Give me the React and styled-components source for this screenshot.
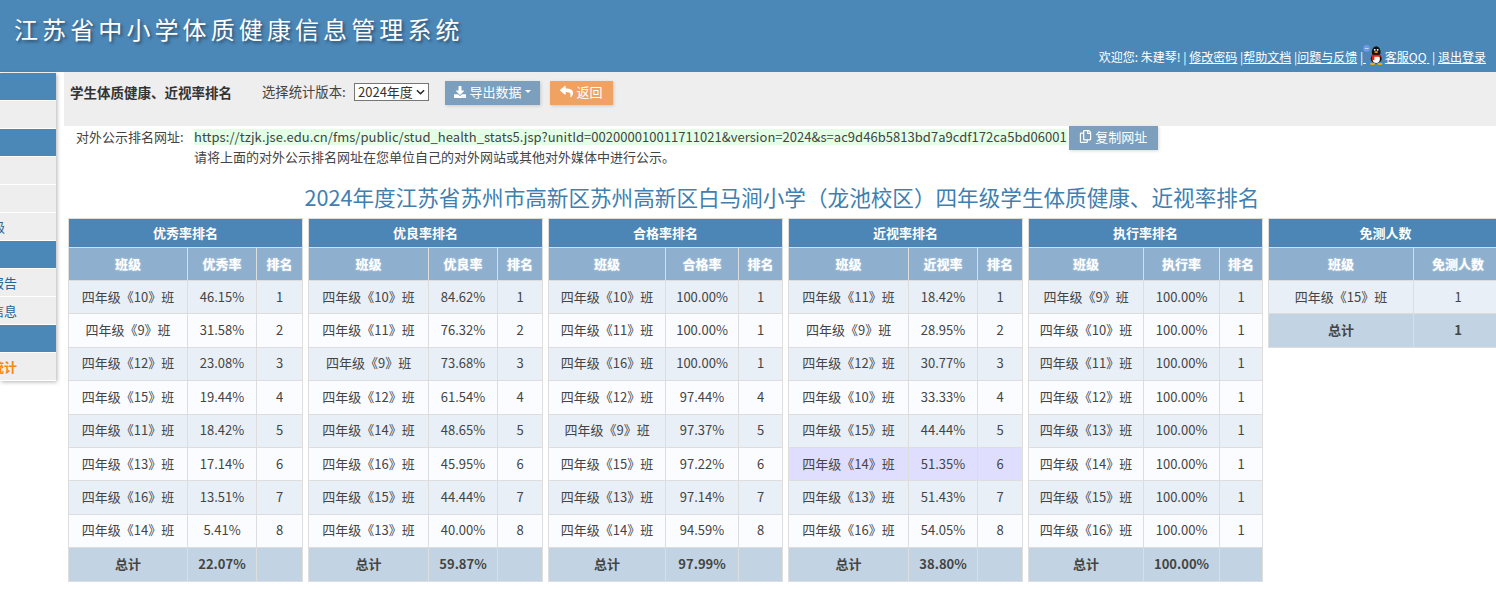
import React from 'react';
import styled, { createGlobalStyle } from 'styled-components';
import { FaDownload, FaReply, FaRegCopy } from 'react-icons/fa';

const FONT = '"Noto Sans CJK SC", "Noto Sans", sans-serif';

const tables = [
  {
    title: '优秀率排名', label: '优秀率', cols: [119, 69, 46], total: '22.07%',
    rows: [['10', '46.15%'], ['9', '31.58%'], ['12', '23.08%'], ['15', '19.44%'], ['11', '18.42%'], ['13', '17.14%'], ['16', '13.51%'], ['14', '5.41%']],
  },
  {
    title: '优良率排名', label: '优良率', cols: [120, 69, 45], total: '59.87%',
    rows: [['10', '84.62%'], ['11', '76.32%'], ['9', '73.68%'], ['12', '61.54%'], ['14', '48.65%'], ['16', '45.95%'], ['15', '44.44%'], ['13', '40.00%']],
  },
  {
    title: '合格率排名', label: '合格率', cols: [117, 73, 44], total: '97.99%',
    rows: [['10', '100.00%', 1], ['11', '100.00%', 1], ['16', '100.00%', 1], ['12', '97.44%', 4], ['9', '97.37%', 5], ['15', '97.22%', 6], ['13', '97.14%', 7], ['14', '94.59%', 8]],
  },
  {
    title: '近视率排名', label: '近视率', cols: [120, 69, 45], total: '38.80%', highlight: 5,
    rows: [['11', '18.42%'], ['9', '28.95%'], ['12', '30.77%'], ['10', '33.33%'], ['15', '44.44%'], ['14', '51.35%'], ['13', '51.43%'], ['16', '54.05%']],
  },
  {
    title: '执行率排名', label: '执行率', cols: [115, 76, 43], total: '100.00%',
    rows: [['9', '100.00%', 1], ['10', '100.00%', 1], ['11', '100.00%', 1], ['12', '100.00%', 1], ['13', '100.00%', 1], ['14', '100.00%', 1], ['15', '100.00%', 1], ['16', '100.00%', 1]],
  },
];

const sideItems = [
  { head: true }, {},
  { head: true }, {}, {}, { text: '级', pad: 51 },
  { head: true }, { text: '报告' }, { text: '信息' },
  { head: true }, { text: '统计', active: true },
];

const QQIcon = () => (
  <QQSvg viewBox="0 0 30 30">
    <circle cx="5" cy="6" r="4.6" fill="#6f9ae6" />
    <rect x="2.5" y="5.4" width="5" height="1.2" fill="#d5e3fb" />
    <ellipse cx="18" cy="11" rx="6" ry="8" fill="#111" />
    <ellipse cx="18" cy="20" rx="7.5" ry="6.5" fill="#111" />
    <ellipse cx="18" cy="20.5" rx="5" ry="5.5" fill="#fff" />
    <rect x="11.5" y="14.5" width="13" height="3" rx="1.4" fill="#e0201b" />
    <rect x="12" y="16" width="3.5" height="6" fill="#e0201b" />
    <circle cx="16" cy="8" r="1.3" fill="#fff" />
    <circle cx="20" cy="8" r="1.3" fill="#fff" />
    <ellipse cx="18" cy="11" rx="2.6" ry="1.2" fill="#f5a800" />
    <ellipse cx="13" cy="27" rx="3.6" ry="1.6" fill="#f5a800" />
    <ellipse cx="23" cy="27" rx="3.6" ry="1.6" fill="#f5a800" />
  </QQSvg>
);

const RankTable = ({ table }) => (
  <Table>
    <colgroup>
      {table.cols.map((w, i) => <Col key={i} $w={w} />)}
    </colgroup>
    <thead>
      <tr><TitleCell colSpan={3}>{table.title}</TitleCell></tr>
      <tr>
        <HeadCell>班级</HeadCell>
        <HeadCell>{table.label}</HeadCell>
        <HeadCell>排名</HeadCell>
      </tr>
    </thead>
    <tbody>
      {table.rows.map((row, i) => (
        <Row key={i} $odd={i % 2 === 0} $hl={table.highlight === i}>
          <Cell>四年级《{row[0]}》班</Cell>
          <Cell>{row[1]}</Cell>
          <Cell>{row[2] || i + 1}</Cell>
        </Row>
      ))}
      <TotalRow>
        <td>总计</td>
        <td>{table.total}</td>
        <td></td>
      </TotalRow>
    </tbody>
  </Table>
);

export default function App() {
  return (
    <Page>
      <GlobalStyle />
      <Header>
        <SiteTitle>江苏省中小学体质健康信息管理系统</SiteTitle>
        <UserBar>
          欢迎您: 朱建琴! | <a>修改密码</a> |<a>帮助文档</a> |<a>问题与反馈</a> |<a>&nbsp;</a>
          <QQIcon />
          <a>客服QQ&nbsp;</a> | <a>退出登录</a>
        </UserBar>
      </Header>
      <Body>
        <Sidebar>
          {sideItems.map((item, i) => (
            <SideItem key={i} $head={item.head} $active={item.active} $pad={item.pad}>{item.text}</SideItem>
          ))}
        </Sidebar>
        <Main>
          <Toolbar>
            <PageName>学生体质健康、近视率排名</PageName>
            <SelectLabel>选择统计版本:</SelectLabel>
            <SelectWrap>
              <VersionSelect defaultValue="2024">
                <option value="2024">2024年度</option>
              </VersionSelect>
              <Chevron viewBox="0 0 10 6"><path d="M1 1l4 4 4-4" /></Chevron>
            </SelectWrap>
            <Button $color="#7b9fbd" $w={95}><FaDownload size={12} />导出数据<Caret /></Button>
            <Button $color="#f0a262" $w={63}><FaReply size={13} />返回</Button>
          </Toolbar>
          <LinkBlock>
            <LinkLabel>对外公示排名网址:</LinkLabel>
            <LinkBody>
              <LinkRow>
                <Url>https://tzjk.jse.edu.cn/fms/public/stud_health_stats5.jsp?unitId=002000010011711021&amp;version=2024&amp;s=ac9d46b5813bd7a9cdf172ca5bd06001</Url>
                <CopyButton $color="#7b9fbd" $w={89}><FaRegCopy size={13} />复制网址</CopyButton>
              </LinkRow>
              <Hint>请将上面的对外公示排名网址在您单位自己的对外网站或其他对外媒体中进行公示。</Hint>
            </LinkBody>
          </LinkBlock>
          <ReportTitle>2024年度江苏省苏州市高新区苏州高新区白马涧小学（龙池校区）四年级学生体质健康、近视率排名</ReportTitle>
          <Tables>
            {tables.map(t => <RankTable key={t.title} table={t} />)}
            <Table>
              <colgroup>
                <Col $w={145} />
                <Col $w={89} />
              </colgroup>
              <thead>
                <tr><TitleCell colSpan={2}>免测人数</TitleCell></tr>
                <tr>
                  <HeadCell>班级</HeadCell>
                  <HeadCell>免测人数</HeadCell>
                </tr>
              </thead>
              <tbody>
                <Row $odd>
                  <Cell>四年级《15》班</Cell>
                  <Cell>1</Cell>
                </Row>
                <TotalRow>
                  <td>总计</td>
                  <td>1</td>
                </TotalRow>
              </tbody>
            </Table>
          </Tables>
        </Main>
      </Body>
    </Page>
  );
}

const GlobalStyle = createGlobalStyle`
  html, body {
    margin: 0;
    padding: 0;
    background: #fff;
    overflow: hidden;
  }
  body {
    font-family: ${FONT};
    font-size: 13px;
    color: #444;
  }
`;

const Page = styled.div`
  width: 1496px;
  height: 590px;
  overflow: hidden;
`;

const Header = styled.div`
  height: 72px;
  background: #4b88b8;
  display: flex;
  justify-content: space-between;
`;

const SiteTitle = styled.div`
  margin: 11px 0 0 14px;
  font-size: 24px;
  line-height: 36px;
  letter-spacing: 4.1px;
  color: #fff;
  font-weight: 400;
  text-shadow: 2px 2px 3px rgba(40, 60, 80, 0.75);
`;

const UserBar = styled.div`
  align-self: flex-end;
  padding: 0 10px 5px 0;
  color: #fff;
  font-size: 12px;
  line-height: 20px;
  white-space: pre-wrap;
  a {
    text-decoration: underline;
    color: #fff;
  }
`;

const QQSvg = styled.svg`
  width: 22px;
  height: 22px;
  vertical-align: -4px;
  margin: -6px 0 0 -3px;
`;

const Body = styled.div`
  display: flex;
  gap: 8px;
`;

const Sidebar = styled.div`
  width: 56px;
  flex: none;
  margin-top: 1px;
  align-self: flex-start;
  box-shadow: 1px 1px 4px rgba(0, 0, 0, 0.3);
`;

const SideItem = styled.div`
  height: 27px;
  line-height: 27px;
  margin-bottom: 1px;
  background: ${p => (p.$head ? '#4b88b8' : '#eee')};
  color: ${p => (p.$active ? '#f58a0b' : '#2a6496')};
  font-weight: ${p => (p.$active ? 'bold' : 'normal')};
  display: flex;
  justify-content: flex-end;
  overflow: hidden;
  white-space: nowrap;
  padding-right: ${p => p.$pad || 39}px;
`;

const Main = styled.div`
  flex: 1;
  min-width: 0;
`;

const Toolbar = styled.div`
  height: 54px;
  background: #eee;
  display: flex;
  align-items: flex-start;
  padding: 9px 0 0 6px;
  box-sizing: border-box;
  font-size: 13.33px;
`;

const PageName = styled.div`
  font-size: 13.5px;
  font-weight: bold;
  color: #333;
  width: 192px;
  line-height: 22px;
`;

const SelectLabel = styled.div`
  width: 92px;
  line-height: 22px;
`;

const SelectWrap = styled.div`
  position: relative;
  width: 75px;
  height: 18px;
  margin: 2px 16px 0 0;
`;

const VersionSelect = styled.select`
  appearance: none;
  display: block;
  width: 75px;
  height: 18px;
  margin: 0;
  padding: 0 0 0 3px;
  box-sizing: border-box;
  font-family: ${FONT};
  font-size: 13px;
  line-height: 16px;
  background: #fff;
  color: #333;
  border: 1px solid #767676;
  border-radius: 0;
`;

const Chevron = styled.svg`
  position: absolute;
  right: 4px;
  top: 6px;
  width: 9px;
  height: 6px;
  pointer-events: none;
  path {
    fill: none;
    stroke: #222;
    stroke-width: 1.6;
  }
`;

const Button = styled.div`
  width: ${p => p.$w}px;
  height: 24px;
  margin-right: 10px;
  padding-bottom: 3px;
  box-sizing: border-box;
  background: ${p => p.$color};
  color: #fff;
  font-size: 13px;
  display: flex;
  align-items: center;
  justify-content: center;
  gap: 3px;
  box-shadow: 1px 1px 3px rgba(0, 0, 0, 0.15);
`;

const CopyButton = styled(Button)`
  margin: -3px 0 0 2px;
`;

const Caret = styled.span`
  width: 0;
  height: 0;
  border-left: 3px solid transparent;
  border-right: 3px solid transparent;
  border-top: 3px solid #fff;
`;

const LinkBlock = styled.div`
  display: flex;
  padding: 3px 0 0 12px;
`;

const LinkLabel = styled.div`
  width: 118px;
  line-height: 16px;
  flex: none;
`;

const LinkBody = styled.div`
  min-width: 0;
`;

const LinkRow = styled.div`
  display: flex;
  align-items: flex-start;
  height: 19px;
`;

const Url = styled.span`
  background: #e3ffe6;
  line-height: 16px;
  height: 16px;
  white-space: nowrap;
  color: #444;
  letter-spacing: 0.036px;
`;

const Hint = styled.div`
  line-height: 18px;
`;

const ReportTitle = styled.div`
  margin: 13px 0 0 4px;
  text-align: center;
  font-size: 21.6px;
  line-height: 36px;
  color: #3f80b0;
  white-space: nowrap;
`;

const Tables = styled.div`
  display: flex;
  align-items: flex-start;
  gap: 5px;
  margin: 3px 0 0 4px;
  width: 1500px;
`;

const Table = styled.table`
  flex: none;
  table-layout: fixed;
  width: 235px;
  border-collapse: collapse;
  text-align: center;
`;

const Col = styled.col`
  width: ${p => p.$w}px;
`;

const TitleCell = styled.th`
  height: 26px;
  padding: 0 0 2px;
  background: #4b86b6;
  color: #fff;
  border: 1px solid #ddd;
  font-size: 13px;
  font-weight: bold;
`;

const HeadCell = styled.th`
  height: 30px;
  padding: 0 0 2px;
  background: #8eb0ce;
  color: #fff;
  border: 1px solid #ddd;
  font-size: 13px;
  font-weight: bold;
  text-shadow: 0 0 2px rgba(255, 255, 255, 0.6);
`;

const Row = styled.tr`
  height: 33.4px;
  background: ${p => (p.$hl ? '#e0deff' : p.$odd ? '#e8eff7' : '#fbfcff')};
`;

const Cell = styled.td`
  padding: 0 0 2px;
  border: 1px solid #ddd;
  white-space: nowrap;
`;

const TotalRow = styled.tr`
  height: 33.4px;
  background: #c2d4e3;
  font-weight: bold;
  td {
    padding: 0 0 2px;
    border: 1px solid #ddd;
  }
`;
